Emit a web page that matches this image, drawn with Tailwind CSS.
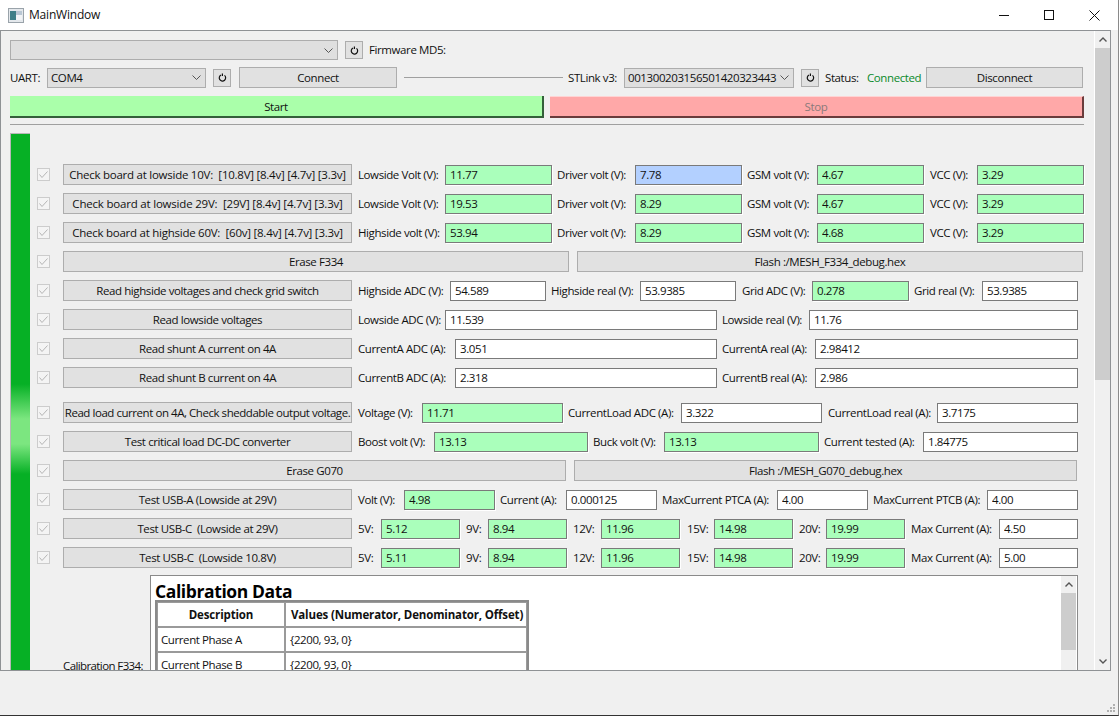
<!DOCTYPE html>
<html lang="en">
<head>
    <meta charset="UTF-8">
    <title>MainWindow</title>
    <script src="https://cdn.jsdelivr.net/npm/@tailwindcss/browser@4"></script>
</head>
<body class="w-[1119px] h-[716px] overflow-hidden bg-[#f0f0f0] text-[#111] font-['Open_Sans',sans-serif] text-[11.5px] tracking-[-0.4px] leading-none">
<div class="flex flex-col h-[716px] border-r border-r-[#8a8a8a] border-b border-b-[#333]">

    <!-- Title bar -->
    <div class="flex items-center h-[30px] bg-white shrink-0">
        <svg class="ml-[8px] w-[16px] h-[15px]" viewBox="0 0 16 15"><rect x="0.5" y="0.5" width="15" height="14" fill="#e4e8ec" stroke="#9aa3aa"/><rect x="2" y="3" width="6" height="9" fill="#3f7f88"/><rect x="8" y="3" width="6" height="4" fill="#b9c7d4"/><rect x="8" y="7" width="6" height="5" fill="#f2f4f6"/></svg>
        <span class="ml-[5px] text-[12px] tracking-[-0.2px]">MainWindow</span>
        <svg class="ml-auto mr-[35px] w-[10px] h-[10px]" viewBox="0 0 10 10"><path d="M0 5.5H10" stroke="#111" stroke-width="1"/></svg>
        <svg class="mr-[35px] w-[10px] h-[10px]" viewBox="0 0 10 10"><rect x="0.5" y="0.5" width="9" height="9" fill="none" stroke="#111"/></svg>
        <svg class="mr-[18px] w-[11px] h-[11px]" viewBox="0 0 11 11"><path d="M0.5 0.5L10.5 10.5M10.5 0.5L0.5 10.5" stroke="#111" stroke-width="1"/></svg>
    </div>

    <!-- Scroll area -->
    <div class="flex h-[641px] w-[1111px] shrink-0 border border-[#8f9295] overflow-hidden">
        <div class="w-[1092px] shrink-0 pl-[9px] pt-[9px]">

            <!-- Firmware row -->
            <div class="flex items-center h-[20px]">
                <div class="flex items-center justify-end w-[328px] h-[20px] bg-[#dfdfdf] border border-[#adadad] pr-[4px]">
                    <svg class="w-[9px] h-[5px]" viewBox="0 0 9 5"><path d="M0.5 0.5L4.5 4.5L8.5 0.5" fill="none" stroke="#555"/></svg>
                </div>
                <div class="flex items-center justify-center w-[18px] h-[18px] ml-[7px] bg-[#e1e1e1] border border-[#adadad]">
                    <svg class="w-[9px] h-[9px]" viewBox="0 0 9 9"><path d="M3 2A3.2 3.2 0 1 0 6.5 2.4M4.4 0.5V3" fill="none" stroke="#111" stroke-width="1.2"/></svg>
                </div>
                <span class="ml-[6px]">Firmware MD5:</span>
            </div>

            <!-- Connection row -->
            <div class="flex items-center h-[21px] mt-[7px]">
                <span class="w-[37px]">UART:</span>
                <div class="flex items-center w-[159px] h-[20px] bg-[#dfdfdf] border border-[#adadad] pl-[3px] pr-[4px]">COM4
                    <svg class="ml-auto w-[9px] h-[5px]" viewBox="0 0 9 5"><path d="M0.5 0.5L4.5 4.5L8.5 0.5" fill="none" stroke="#555"/></svg>
                </div>
                <div class="flex items-center justify-center w-[18px] h-[18px] ml-[7px] bg-[#e1e1e1] border border-[#adadad]">
                    <svg class="w-[9px] h-[9px]" viewBox="0 0 9 9"><path d="M3 2A3.2 3.2 0 1 0 6.5 2.4M4.4 0.5V3" fill="none" stroke="#111" stroke-width="1.2"/></svg>
                </div>
                <button class="w-[158px] h-[21px] ml-[8px] bg-[#e1e1e1] border border-[#adadad]">Connect</button>
                <div class="w-[159px] h-px ml-[7px] bg-[#a0a0a0]"></div>
                <span class="w-[56px] ml-[5px]">STLink v3:</span>
                <div class="flex items-center w-[170px] h-[20px] bg-[#dfdfdf] border border-[#adadad] pl-[3px] pr-[4px]">001300203156501420323443
                    <svg class="ml-auto w-[9px] h-[5px]" viewBox="0 0 9 5"><path d="M0.5 0.5L4.5 4.5L8.5 0.5" fill="none" stroke="#555"/></svg>
                </div>
                <div class="flex items-center justify-center w-[18px] h-[18px] ml-[7px] bg-[#e1e1e1] border border-[#adadad]">
                    <svg class="w-[9px] h-[9px]" viewBox="0 0 9 9"><path d="M3 2A3.2 3.2 0 1 0 6.5 2.4M4.4 0.5V3" fill="none" stroke="#111" stroke-width="1.2"/></svg>
                </div>
                <span class="w-[42px] ml-[6px]">Status:</span>
                <span class="w-[59px] text-[#0a8a2a]">Connected</span>
                <button class="w-[157px] h-[21px] bg-[#e1e1e1] border border-[#adadad]">Disconnect</button>
            </div>

            <!-- Start / Stop -->
            <div class="flex h-[22px] mt-[8px]">
                <button class="w-[534px] pt-px bg-[#aaffaa] border-r-2 border-b-2 border-[#34603a]">Start</button>
                <button class="w-[534px] ml-[6px] pt-px bg-[#ffa8a8] text-[#8a7a7a] border-t border-t-[#ffd4d4] border-r-2 border-b-2 border-r-[#6a3c3c] border-b-[#6a3c3c]">Stop</button>
            </div>
            <div class="w-[1074px] h-px mt-[6px] bg-[#a0a0a0]"></div>

            <!-- Progress bar and test rows -->
            <div class="flex mt-[8px]">
                <div class="w-[20px] h-[640px] shrink-0 border-t border-l border-[#b8b8b8] bg-[linear-gradient(#06b025_250px,#7ce680_285px,#7ce680_310px,#06b025_340px)]"></div>
                <div class="ml-[7px] pt-[31px]">
                    <div class="flex flex-col gap-[8px]">

                        <div class="flex items-center h-[21px]">
                            <svg class="w-[13px] h-[13px] mr-[13px]" viewBox="0 0 13 13"><rect x="0.5" y="0.5" width="12" height="12" fill="#f4f4f4" stroke="#cccccc"/><path d="M2.5 6.5L5 9.5L10.5 3.5" fill="none" stroke="#b5b5b5"/></svg>
                            <button class="w-[289px] h-[21px] bg-[#e1e1e1] border border-[#adadad] whitespace-pre tracking-[-0.25px]">Check board at lowside 10V:  [10.8V] [8.4v] [4.7v] [3.3v]</button>
                            <span class="w-[87px] ml-[6px] whitespace-nowrap">Lowside Volt (V):</span>
                            <input value="11.77" class="w-[107px] h-[20px] pl-[4px] border border-[#7a7a7a] bg-[#aaffbb] shadow-[1px_1px_0_#fff]">
                            <span class="w-[78px] ml-[5px] whitespace-nowrap">Driver volt (V):</span>
                            <input value="7.78" class="w-[107px] h-[20px] pl-[4px] border border-[#7a7a7a] bg-[#b3d0ff] shadow-[1px_1px_0_#fff]">
                            <span class="w-[70px] ml-[5px] whitespace-nowrap">GSM volt (V):</span>
                            <input value="4.67" class="w-[107px] h-[20px] pl-[4px] border border-[#7a7a7a] bg-[#aaffbb] shadow-[1px_1px_0_#fff]">
                            <span class="w-[47px] ml-[6px] whitespace-nowrap">VCC (V):</span>
                            <input value="3.29" class="w-[107px] h-[20px] pl-[4px] border border-[#7a7a7a] bg-[#aaffbb] shadow-[1px_1px_0_#fff]">
                        </div>

                        <div class="flex items-center h-[21px]">
                            <svg class="w-[13px] h-[13px] mr-[13px]" viewBox="0 0 13 13"><rect x="0.5" y="0.5" width="12" height="12" fill="#f4f4f4" stroke="#cccccc"/><path d="M2.5 6.5L5 9.5L10.5 3.5" fill="none" stroke="#b5b5b5"/></svg>
                            <button class="w-[289px] h-[21px] bg-[#e1e1e1] border border-[#adadad] whitespace-pre tracking-[-0.2px]">Check board at lowside 29V:  [29V] [8.4v] [4.7v] [3.3v]</button>
                            <span class="w-[87px] ml-[6px] whitespace-nowrap">Lowside Volt (V):</span>
                            <input value="19.53" class="w-[107px] h-[20px] pl-[4px] border border-[#7a7a7a] bg-[#aaffbb] shadow-[1px_1px_0_#fff]">
                            <span class="w-[78px] ml-[5px] whitespace-nowrap">Driver volt (V):</span>
                            <input value="8.29" class="w-[107px] h-[20px] pl-[4px] border border-[#7a7a7a] bg-[#aaffbb] shadow-[1px_1px_0_#fff]">
                            <span class="w-[70px] ml-[5px] whitespace-nowrap">GSM volt (V):</span>
                            <input value="4.67" class="w-[107px] h-[20px] pl-[4px] border border-[#7a7a7a] bg-[#aaffbb] shadow-[1px_1px_0_#fff]">
                            <span class="w-[47px] ml-[6px] whitespace-nowrap">VCC (V):</span>
                            <input value="3.29" class="w-[107px] h-[20px] pl-[4px] border border-[#7a7a7a] bg-[#aaffbb] shadow-[1px_1px_0_#fff]">
                        </div>

                        <div class="flex items-center h-[21px]">
                            <svg class="w-[13px] h-[13px] mr-[13px]" viewBox="0 0 13 13"><rect x="0.5" y="0.5" width="12" height="12" fill="#f4f4f4" stroke="#cccccc"/><path d="M2.5 6.5L5 9.5L10.5 3.5" fill="none" stroke="#b5b5b5"/></svg>
                            <button class="w-[289px] h-[21px] bg-[#e1e1e1] border border-[#adadad] whitespace-pre tracking-[-0.25px]">Check board at highside 60V:  [60v] [8.4v] [4.7v] [3.3v]</button>
                            <span class="w-[87px] ml-[6px] whitespace-nowrap">Highside volt (V):</span>
                            <input value="53.94" class="w-[107px] h-[20px] pl-[4px] border border-[#7a7a7a] bg-[#aaffbb] shadow-[1px_1px_0_#fff]">
                            <span class="w-[78px] ml-[5px] whitespace-nowrap">Driver volt (V):</span>
                            <input value="8.29" class="w-[107px] h-[20px] pl-[4px] border border-[#7a7a7a] bg-[#aaffbb] shadow-[1px_1px_0_#fff]">
                            <span class="w-[70px] ml-[5px] whitespace-nowrap">GSM volt (V):</span>
                            <input value="4.68" class="w-[107px] h-[20px] pl-[4px] border border-[#7a7a7a] bg-[#aaffbb] shadow-[1px_1px_0_#fff]">
                            <span class="w-[47px] ml-[6px] whitespace-nowrap">VCC (V):</span>
                            <input value="3.29" class="w-[107px] h-[20px] pl-[4px] border border-[#7a7a7a] bg-[#aaffbb] shadow-[1px_1px_0_#fff]">
                        </div>

                        <div class="flex items-center h-[21px]">
                            <svg class="w-[13px] h-[13px] mr-[13px]" viewBox="0 0 13 13"><rect x="0.5" y="0.5" width="12" height="12" fill="#f4f4f4" stroke="#cccccc"/><path d="M2.5 6.5L5 9.5L10.5 3.5" fill="none" stroke="#b5b5b5"/></svg>
                            <button class="w-[506px] h-[21px] bg-[#e1e1e1] border border-[#adadad]">Erase F334</button>
                            <button class="w-[506px] h-[21px] ml-[8px] bg-[#e1e1e1] border border-[#adadad]">Flash :/MESH_F334_debug.hex</button>
                        </div>

                        <div class="flex items-center h-[21px]">
                            <svg class="w-[13px] h-[13px] mr-[13px]" viewBox="0 0 13 13"><rect x="0.5" y="0.5" width="12" height="12" fill="#f4f4f4" stroke="#cccccc"/><path d="M2.5 6.5L5 9.5L10.5 3.5" fill="none" stroke="#b5b5b5"/></svg>
                            <button class="w-[289px] h-[21px] bg-[#e1e1e1] border border-[#adadad]">Read highside voltages and check grid switch</button>
                            <span class="w-[92px] ml-[6px] whitespace-nowrap">Highside ADC (V):</span>
                            <input value="54.589" class="w-[96px] h-[20px] pl-[4px] border border-[#7a7a7a] bg-white">
                            <span class="w-[89px] ml-[5px] whitespace-nowrap">Highside real (V):</span>
                            <input value="53.9385" class="w-[96px] h-[20px] pl-[4px] border border-[#7a7a7a] bg-white">
                            <span class="w-[70px] ml-[6px] whitespace-nowrap">Grid ADC (V):</span>
                            <input value="0.278" class="w-[97px] h-[20px] pl-[4px] border border-[#7a7a7a] bg-[#aaffbb] shadow-[1px_1px_0_#fff]">
                            <span class="w-[68px] ml-[5px] whitespace-nowrap">Grid real (V):</span>
                            <input value="53.9385" class="w-[96px] h-[20px] pl-[4px] border border-[#7a7a7a] bg-white">
                        </div>

                        <div class="flex items-center h-[21px]">
                            <svg class="w-[13px] h-[13px] mr-[13px]" viewBox="0 0 13 13"><rect x="0.5" y="0.5" width="12" height="12" fill="#f4f4f4" stroke="#cccccc"/><path d="M2.5 6.5L5 9.5L10.5 3.5" fill="none" stroke="#b5b5b5"/></svg>
                            <button class="w-[289px] h-[21px] bg-[#e1e1e1] border border-[#adadad]">Read lowside voltages</button>
                            <span class="w-[87px] ml-[6px] whitespace-nowrap">Lowside ADC (V):</span>
                            <input value="11.539" class="w-[272px] h-[20px] pl-[4px] border border-[#7a7a7a] bg-white">
                            <span class="w-[87px] ml-[5px] whitespace-nowrap">Lowside real (V):</span>
                            <input value="11.76" class="w-[269px] h-[20px] pl-[4px] border border-[#7a7a7a] bg-white">
                        </div>

                        <div class="flex items-center h-[21px]">
                            <svg class="w-[13px] h-[13px] mr-[13px]" viewBox="0 0 13 13"><rect x="0.5" y="0.5" width="12" height="12" fill="#f4f4f4" stroke="#cccccc"/><path d="M2.5 6.5L5 9.5L10.5 3.5" fill="none" stroke="#b5b5b5"/></svg>
                            <button class="w-[289px] h-[21px] bg-[#e1e1e1] border border-[#adadad]">Read shunt A current on 4A</button>
                            <span class="w-[97px] ml-[6px] whitespace-nowrap">CurrentA ADC (A):</span>
                            <input value="3.051" class="w-[262px] h-[20px] pl-[4px] border border-[#7a7a7a] bg-white">
                            <span class="w-[93px] ml-[5px] whitespace-nowrap">CurrentA real (A):</span>
                            <input value="2.98412" class="w-[263px] h-[20px] pl-[4px] border border-[#7a7a7a] bg-white">
                        </div>

                        <div class="flex items-center h-[21px]">
                            <svg class="w-[13px] h-[13px] mr-[13px]" viewBox="0 0 13 13"><rect x="0.5" y="0.5" width="12" height="12" fill="#f4f4f4" stroke="#cccccc"/><path d="M2.5 6.5L5 9.5L10.5 3.5" fill="none" stroke="#b5b5b5"/></svg>
                            <button class="w-[289px] h-[21px] bg-[#e1e1e1] border border-[#adadad]">Read shunt B current on 4A</button>
                            <span class="w-[97px] ml-[6px] whitespace-nowrap">CurrentB ADC (A):</span>
                            <input value="2.318" class="w-[262px] h-[20px] pl-[4px] border border-[#7a7a7a] bg-white">
                            <span class="w-[93px] ml-[5px] whitespace-nowrap">CurrentB real (A):</span>
                            <input value="2.986" class="w-[263px] h-[20px] pl-[4px] border border-[#7a7a7a] bg-white">
                        </div>

                        <div class="flex items-center h-[21px] mt-[6px]">
                            <svg class="w-[13px] h-[13px] mr-[13px]" viewBox="0 0 13 13"><rect x="0.5" y="0.5" width="12" height="12" fill="#f4f4f4" stroke="#cccccc"/><path d="M2.5 6.5L5 9.5L10.5 3.5" fill="none" stroke="#b5b5b5"/></svg>
                            <button class="w-[289px] h-[21px] bg-[#e1e1e1] border border-[#adadad] whitespace-nowrap tracking-[-0.45px]">Read load current on 4A, Check sheddable output voltage.</button>
                            <span class="w-[64px] ml-[6px] whitespace-nowrap">Voltage (V):</span>
                            <input value="11.71" class="w-[141px] h-[20px] pl-[4px] border border-[#7a7a7a] bg-[#aaffbb] shadow-[1px_1px_0_#fff]">
                            <span class="w-[113px] ml-[5px] whitespace-nowrap">CurrentLoad ADC (A):</span>
                            <input value="3.322" class="w-[141px] h-[20px] pl-[4px] border border-[#7a7a7a] bg-white">
                            <span class="w-[109px] ml-[6px] whitespace-nowrap">CurrentLoad real (A):</span>
                            <input value="3.7175" class="w-[141px] h-[20px] pl-[4px] border border-[#7a7a7a] bg-white">
                        </div>

                        <div class="flex items-center h-[21px]">
                            <svg class="w-[13px] h-[13px] mr-[13px]" viewBox="0 0 13 13"><rect x="0.5" y="0.5" width="12" height="12" fill="#f4f4f4" stroke="#cccccc"/><path d="M2.5 6.5L5 9.5L10.5 3.5" fill="none" stroke="#b5b5b5"/></svg>
                            <button class="w-[289px] h-[21px] bg-[#e1e1e1] border border-[#adadad]">Test critical load DC-DC converter</button>
                            <span class="w-[76px] ml-[6px] whitespace-nowrap">Boost volt (V):</span>
                            <input value="13.13" class="w-[154px] h-[20px] pl-[4px] border border-[#7a7a7a] bg-[#aaffbb] shadow-[1px_1px_0_#fff]">
                            <span class="w-[71px] ml-[5px] whitespace-nowrap">Buck volt (V):</span>
                            <input value="13.13" class="w-[155px] h-[20px] pl-[4px] border border-[#7a7a7a] bg-[#aaffbb] shadow-[1px_1px_0_#fff]">
                            <span class="w-[99px] ml-[5px] whitespace-nowrap">Current tested (A):</span>
                            <input value="1.84775" class="w-[155px] h-[20px] pl-[4px] border border-[#7a7a7a] bg-white">
                        </div>

                        <div class="flex items-center h-[21px]">
                            <svg class="w-[13px] h-[13px] mr-[13px]" viewBox="0 0 13 13"><rect x="0.5" y="0.5" width="12" height="12" fill="#f4f4f4" stroke="#cccccc"/><path d="M2.5 6.5L5 9.5L10.5 3.5" fill="none" stroke="#b5b5b5"/></svg>
                            <button class="w-[503px] h-[21px] bg-[#e1e1e1] border border-[#adadad]">Erase G070</button>
                            <button class="w-[503px] h-[21px] ml-[8px] bg-[#e1e1e1] border border-[#adadad]">Flash :/MESH_G070_debug.hex</button>
                        </div>

                        <div class="flex items-center h-[21px]">
                            <svg class="w-[13px] h-[13px] mr-[13px]" viewBox="0 0 13 13"><rect x="0.5" y="0.5" width="12" height="12" fill="#f4f4f4" stroke="#cccccc"/><path d="M2.5 6.5L5 9.5L10.5 3.5" fill="none" stroke="#b5b5b5"/></svg>
                            <button class="w-[289px] h-[21px] bg-[#e1e1e1] border border-[#adadad]">Test USB-A (Lowside at 29V)</button>
                            <span class="w-[46px] ml-[6px] whitespace-nowrap">Volt (V):</span>
                            <input value="4.98" class="w-[91px] h-[20px] pl-[4px] border border-[#7a7a7a] bg-[#aaffbb] shadow-[1px_1px_0_#fff]">
                            <span class="w-[66px] ml-[5px] whitespace-nowrap">Current (A):</span>
                            <input value="0.000125" class="w-[91px] h-[20px] pl-[4px] border border-[#7a7a7a] bg-white">
                            <span class="w-[115px] ml-[5px] whitespace-nowrap">MaxCurrent PTCA (A):</span>
                            <input value="4.00" class="w-[91px] h-[20px] pl-[4px] border border-[#7a7a7a] bg-white">
                            <span class="w-[114px] ml-[5px] whitespace-nowrap">MaxCurrent PTCB (A):</span>
                            <input value="4.00" class="w-[91px] h-[20px] pl-[4px] border border-[#7a7a7a] bg-white">
                        </div>

                        <div class="flex items-center h-[21px]">
                            <svg class="w-[13px] h-[13px] mr-[13px]" viewBox="0 0 13 13"><rect x="0.5" y="0.5" width="12" height="12" fill="#f4f4f4" stroke="#cccccc"/><path d="M2.5 6.5L5 9.5L10.5 3.5" fill="none" stroke="#b5b5b5"/></svg>
                            <button class="w-[289px] h-[21px] bg-[#e1e1e1] border border-[#adadad] whitespace-pre">Test USB-C  (Lowside at 29V)</button>
                            <span class="w-[23px] ml-[6px]">5V:</span>
                            <input value="5.12" class="w-[79px] h-[20px] pl-[4px] border border-[#7a7a7a] bg-[#aaffbb] shadow-[1px_1px_0_#fff]">
                            <span class="w-[22px] ml-[6px]">9V:</span>
                            <input value="8.94" class="w-[79px] h-[20px] pl-[4px] border border-[#7a7a7a] bg-[#aaffbb] shadow-[1px_1px_0_#fff]">
                            <span class="w-[28px] ml-[6px]">12V:</span>
                            <input value="11.96" class="w-[79px] h-[20px] pl-[4px] border border-[#7a7a7a] bg-[#aaffbb] shadow-[1px_1px_0_#fff]">
                            <span class="w-[27px] ml-[7px]">15V:</span>
                            <input value="14.98" class="w-[79px] h-[20px] pl-[4px] border border-[#7a7a7a] bg-[#aaffbb] shadow-[1px_1px_0_#fff]">
                            <span class="w-[27px] ml-[6px]">20V:</span>
                            <input value="19.99" class="w-[79px] h-[20px] pl-[4px] border border-[#7a7a7a] bg-[#aaffbb] shadow-[1px_1px_0_#fff]">
                            <span class="w-[88px] ml-[6px] whitespace-nowrap">Max Current (A):</span>
                            <input value="4.50" class="w-[79px] h-[20px] pl-[4px] border border-[#7a7a7a] bg-white">
                        </div>

                        <div class="flex items-center h-[21px]">
                            <svg class="w-[13px] h-[13px] mr-[13px]" viewBox="0 0 13 13"><rect x="0.5" y="0.5" width="12" height="12" fill="#f4f4f4" stroke="#cccccc"/><path d="M2.5 6.5L5 9.5L10.5 3.5" fill="none" stroke="#b5b5b5"/></svg>
                            <button class="w-[289px] h-[21px] bg-[#e1e1e1] border border-[#adadad] whitespace-pre">Test USB-C  (Lowside 10.8V)</button>
                            <span class="w-[23px] ml-[6px]">5V:</span>
                            <input value="5.11" class="w-[79px] h-[20px] pl-[4px] border border-[#7a7a7a] bg-[#aaffbb] shadow-[1px_1px_0_#fff]">
                            <span class="w-[22px] ml-[6px]">9V:</span>
                            <input value="8.94" class="w-[79px] h-[20px] pl-[4px] border border-[#7a7a7a] bg-[#aaffbb] shadow-[1px_1px_0_#fff]">
                            <span class="w-[28px] ml-[6px]">12V:</span>
                            <input value="11.96" class="w-[79px] h-[20px] pl-[4px] border border-[#7a7a7a] bg-[#aaffbb] shadow-[1px_1px_0_#fff]">
                            <span class="w-[27px] ml-[7px]">15V:</span>
                            <input value="14.98" class="w-[79px] h-[20px] pl-[4px] border border-[#7a7a7a] bg-[#aaffbb] shadow-[1px_1px_0_#fff]">
                            <span class="w-[27px] ml-[6px]">20V:</span>
                            <input value="19.99" class="w-[79px] h-[20px] pl-[4px] border border-[#7a7a7a] bg-[#aaffbb] shadow-[1px_1px_0_#fff]">
                            <span class="w-[88px] ml-[6px] whitespace-nowrap">Max Current (A):</span>
                            <input value="5.00" class="w-[79px] h-[20px] pl-[4px] border border-[#7a7a7a] bg-white">
                        </div>
                    </div>

                    <!-- Calibration view -->
                    <div class="flex items-center mt-[7px] ml-[25px]">
                        <span class="w-[81px] mr-[7px] text-right whitespace-nowrap tracking-[-0.6px]">Calibration F334:</span>
                        <div class="flex w-[928px] h-[182px] bg-white border border-[#8a8a8a] overflow-hidden">
                            <div class="flex-1 pl-[4px] pt-[4px]">
                                <h2 class="text-[17.5px] font-bold leading-[22px] text-black">Calibration Data</h2>
                                <table class="mt-[-1px] ml-px w-[372px] border-collapse text-left outline-2 outline-[#8a8a8a] -outline-offset-1">
                                    <tr class="h-[25px]">
                                        <th class="w-[128px] border-2 border-[#9a9a9a] text-center font-bold tracking-[-0.15px]">Description</th>
                                        <th class="border-2 border-[#9a9a9a] pl-[5px] font-bold tracking-[-0.15px] whitespace-nowrap">Values (Numerator, Denominator, Offset)</th>
                                    </tr>
                                    <tr class="h-[25px]">
                                        <td class="border-2 border-[#9a9a9a] pl-[3px]">Current Phase A</td>
                                        <td class="border-2 border-[#9a9a9a] pl-[4px]">{2200, 93, 0}</td>
                                    </tr>
                                    <tr class="h-[25px]">
                                        <td class="border-2 border-[#9a9a9a] pl-[3px]">Current Phase B</td>
                                        <td class="border-2 border-[#9a9a9a] pl-[4px]">{2200, 93, 0}</td>
                                    </tr>
                                </table>
                            </div>
                            <div class="w-[15px] mr-px shrink-0 bg-[#f0f0f0]">
                                <div class="flex items-center justify-center h-[17px]">
                                    <svg class="w-[8px] h-[5px]" viewBox="0 0 8 5"><path d="M0.5 4.5L4 1L7.5 4.5" fill="none" stroke="#555" stroke-width="1.4"/></svg>
                                </div>
                                <div class="h-[57px] bg-[#cdcdcd]"></div>
                            </div>
                        </div>
                    </div>
                </div>
            </div>
        </div>

        <!-- Main scrollbar -->
        <div class="flex flex-col w-[16px] h-[639px] shrink-0 ml-px bg-[#f0f0f0] border-l border-white">
            <div class="flex items-center justify-center h-[17px]">
                <svg class="w-[8px] h-[5px]" viewBox="0 0 8 5"><path d="M0.5 4.5L4 1L7.5 4.5" fill="none" stroke="#555" stroke-width="1.4"/></svg>
            </div>
            <div class="h-[332px] bg-[#cdcdcd]"></div>
            <div class="flex items-center justify-center h-[17px] mt-auto">
                <svg class="w-[8px] h-[5px]" viewBox="0 0 8 5"><path d="M0.5 0.5L4 4L7.5 0.5" fill="none" stroke="#555" stroke-width="1.4"/></svg>
            </div>
        </div>
    </div>

    <!-- Status bar -->
    <div class="flex items-end justify-end flex-1 pr-[2px] pb-[2px]">
        <svg class="w-[10px] h-[10px]" viewBox="0 0 10 10" fill="#b0b0b0"><rect x="7" y="1" width="2" height="2"/><rect x="4" y="4" width="2" height="2"/><rect x="7" y="4" width="2" height="2"/><rect x="1" y="7" width="2" height="2"/><rect x="4" y="7" width="2" height="2"/><rect x="7" y="7" width="2" height="2"/></svg>
    </div>
</div>
</body>
</html>
